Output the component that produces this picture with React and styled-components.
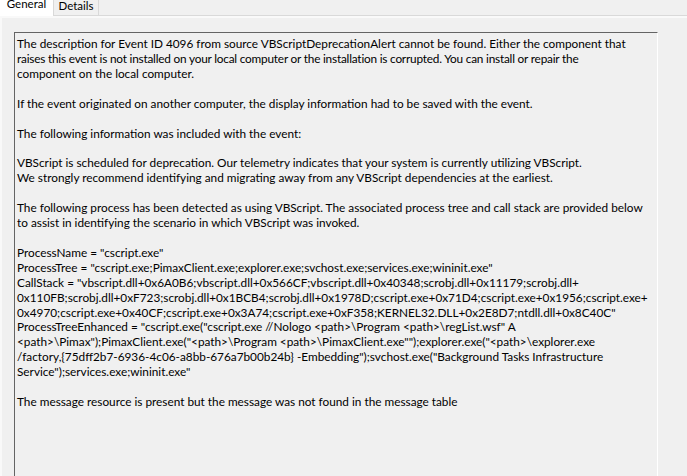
import React from "react";
import styled, { createGlobalStyle } from "styled-components";

const GlobalStyle = createGlobalStyle`
    html, body {
        margin: 0;
        padding: 0;
        background: #f0f0f0;
        overflow: hidden;
    }
    body {
        font-family: Lato, "Liberation Sans", sans-serif;
        font-size: 11.8px;
        color: #000;
    }
`

const Window = styled.div`
    width: 687px;
    height: 476px;
    overflow: hidden;
    background: #f0f0f0;
    display: flex;
    flex-direction: column;
`

const TabStrip = styled.div`
    display: flex;
    align-items: flex-end;
    height: 15px;
    border-bottom: 1px solid #d9d9d9;
    position: relative;
    z-index: 1;
`

const Tab = styled.div`
    box-sizing: border-box;
    width: ${p => (p.$active ? "54px" : "45px")};
    height: ${p => (p.$active ? "18px" : "15px")};
    margin-bottom: ${p => (p.$active ? "-1px" : "0")};
    background: ${p => (p.$active ? "#ffffff" : "#f0f0f0")};
    border-right: 1px solid #d9d9d9;
    font-size: 11.5px;
    line-height: 12px;
    text-align: center;
    white-space: nowrap;
`

const Page = styled.div`
    flex: 1;
    background: #f0f0f0;
    border-left: 2px solid #f9f9f9;
    border-top: 2px solid #f9f9f9;
    padding: 14px 29px 0 12px;
`

const Textbox = styled.div`
    height: 470px;
    background: #f0f0f0;
    border-top: 1px solid #646464;
    border-left: 1px solid #646464;
    border-right: 1px solid #ffffff;
    padding: 4px 0 0 2px;
    line-height: 14.92px;
    white-space: pre;
`

const Line = styled.div`
    min-height: 14.92px;
    letter-spacing: ${p => p.$tight ? "-0.2px" : "normal"};
`

const lines = [
    "The description for Event ID 4096 from source VBScriptDeprecationAlert cannot be found. Either the component that",
    "raises this event is not installed on your local computer or the installation is corrupted. You can install or repair the",
    "component on the local computer.",
    "",
    "If the event originated on another computer, the display information had to be saved with the event.",
    "",
    "The following information was included with the event:",
    "",
    "VBScript is scheduled for deprecation. Our telemetry indicates that your system is currently utilizing VBScript.",
    "We strongly recommend identifying and migrating away from any VBScript dependencies at the earliest.",
    "",
    "The following process has been detected as using VBScript. The associated process tree and call stack are provided below",
    "to assist in identifying the scenario in which VBScript was invoked.",
    "",
    'ProcessName = "cscript.exe"',
    'ProcessTree = "cscript.exe;PimaxClient.exe;explorer.exe;svchost.exe;services.exe;wininit.exe"',
    'CallStack = "vbscript.dll+0x6A0B6;vbscript.dll+0x566CF;vbscript.dll+0x40348;scrobj.dll+0x11179;scrobj.dll+',
    "0x110FB;scrobj.dll+0xF723;scrobj.dll+0x1BCB4;scrobj.dll+0x1978D;cscript.exe+0x71D4;cscript.exe+0x1956;cscript.exe+",
    '0x4970;cscript.exe+0x40CF;cscript.exe+0x3A74;cscript.exe+0xF358;KERNEL32.DLL+0x2E8D7;ntdll.dll+0x8C40C"',
    'ProcessTreeEnhanced = "cscript.exe("cscript.exe //Nologo <path>\\Program <path>\\regList.wsf" A',
    '<path>\\Pimax");PimaxClient.exe("<path>\\Program <path>\\PimaxClient.exe"");explorer.exe("<path>\\explorer.exe',
    '/factory,{75dff2b7-6936-4c06-a8bb-676a7b00b24b} -Embedding");svchost.exe("Background Tasks Infrastructure',
    'Service");services.exe;wininit.exe"',
    "",
    "The message resource is present but the message was not found in the message table",
];

export default function App() {
    return <Window>
        <GlobalStyle />
        <TabStrip>
            <Tab $active>General</Tab>
            <Tab>Details</Tab>
        </TabStrip>
        <Page>
            <Textbox>
                {lines.map((text, i) => (
                    <Line key={i} $tight={i === 1}>{text}</Line>
                ))}
            </Textbox>
        </Page>
    </Window>
}
